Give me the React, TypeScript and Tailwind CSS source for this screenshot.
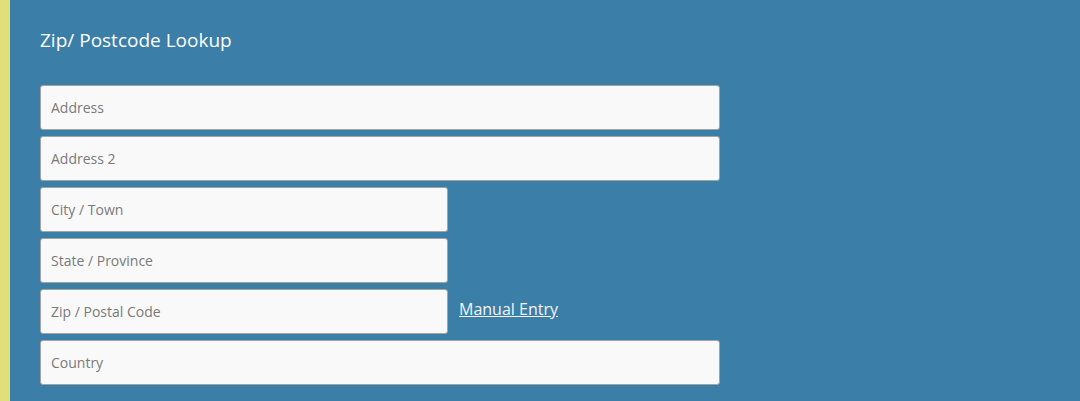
export default function App() {
  const field =
    "h-[45px] rounded-[3px] border border-[#a3a3a3] bg-[#f9f9f9] px-[10px] text-[14px] text-[#555] placeholder:text-[#7a7a7a] outline-none";
  return (
    <div
      className="flex h-[401px] w-[1080px] bg-[#3b7ea8]"
      style={{ fontFamily: '"Open Sans", sans-serif' }}
    >
      <div className="w-[10px] shrink-0 bg-[#e0e07a]" />
      <div className="flex flex-col pl-[30px] pt-[27px]">
        <h2 className="text-[19px] leading-[26px] text-white">Zip/ Postcode Lookup</h2>
        <div className="mt-[32px] flex flex-col gap-[6px]">
          <input className={`${field} w-[680px]`} placeholder="Address" />
          <input className={`${field} w-[680px]`} placeholder="Address 2" />
          <input className={`${field} w-[408px]`} placeholder="City / Town" />
          <input className={`${field} w-[408px]`} placeholder="State / Province" />
          <div className="flex items-center">
            <input className={`${field} w-[408px]`} placeholder="Zip / Postal Code" />
            <a href="#" className="ml-[11px] -mt-[6px] text-[16px] font-medium text-[#f4f4f4] underline">
              Manual Entry
            </a>
          </div>
          <input className={`${field} w-[680px]`} placeholder="Country" />
        </div>
      </div>
    </div>
  );
}
